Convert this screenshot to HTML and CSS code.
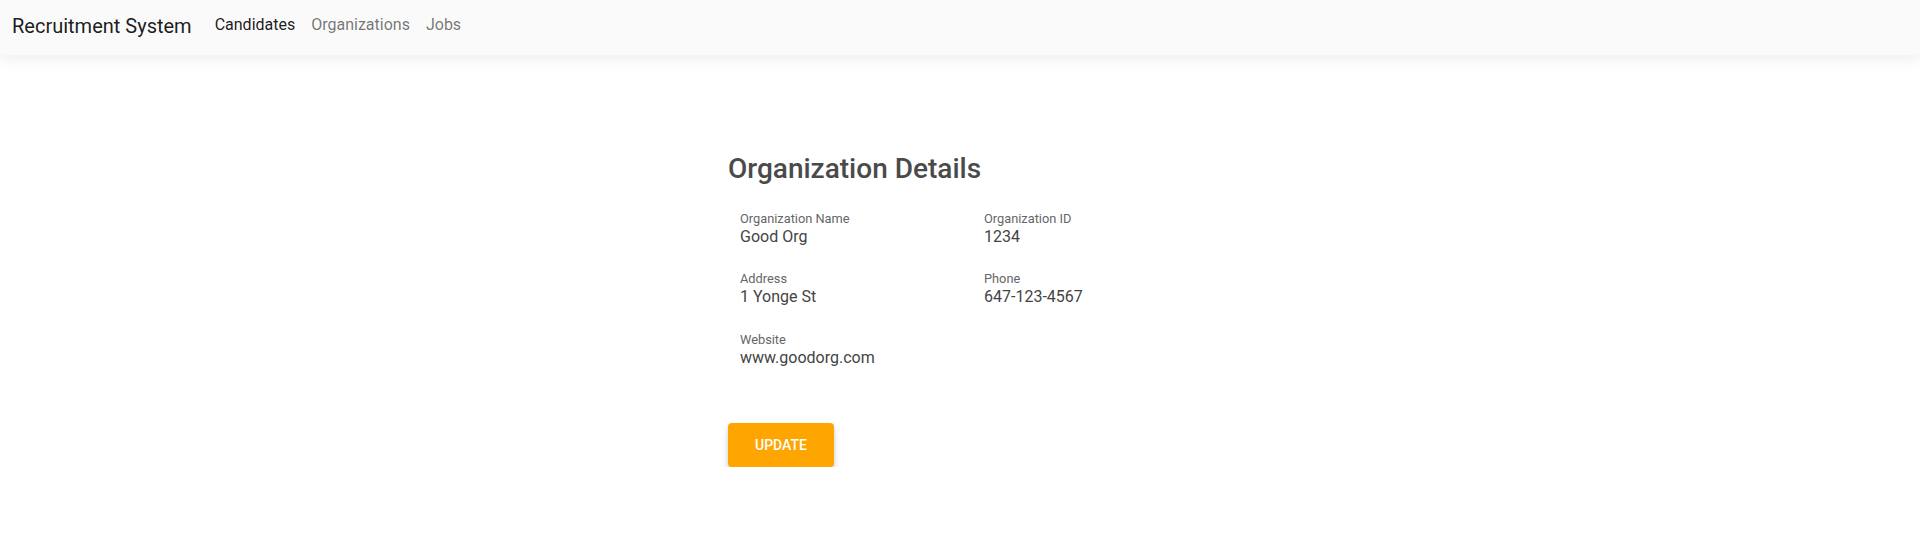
FILE: index.html
```html
<!DOCTYPE html>
<html lang="en">
<head>
<meta charset="utf-8">
<title>Recruitment System</title>
<link rel="stylesheet" href="styles.css">
</head>
<body>
<header class="navbar">
  <a class="brand" href="#">Recruitment System</a>
  <nav class="nav">
    <a class="nav-link active" href="#">Candidates</a>
    <a class="nav-link" href="#">Organizations</a>
    <a class="nav-link" href="#">Jobs</a>
  </nav>
</header>
<main class="container">
  <h1 class="title">Organization Details</h1>
  <div class="details">
    <div class="field">
      <div class="label">Organization Name</div>
      <div class="value">Good Org</div>
    </div>
    <div class="field">
      <div class="label">Organization ID</div>
      <div class="value">1234</div>
    </div>
    <div class="field">
      <div class="label">Address</div>
      <div class="value">1 Yonge St</div>
    </div>
    <div class="field">
      <div class="label">Phone</div>
      <div class="value">647-123-4567</div>
    </div>
    <div class="field">
      <div class="label">Website</div>
      <div class="value">www.goodorg.com</div>
    </div>
  </div>
  <button class="btn-update" type="button">Update</button>
</main>
</body>
</html>
```

FILE: styles.css
```css
* { box-sizing: border-box; }
html, body {
  margin: 0;
  padding: 0;
  background: #ffffff;
  font-family: Roboto, "Liberation Sans", Arial, sans-serif;
}
.navbar {
  height: 55px;
  display: flex;
  align-items: flex-start;
  padding: 11px 12px 0;
  background: #fafafa;
  box-shadow: 0 4px 14px rgba(0, 0, 0, 0.07);
}
.brand {
  font-size: 20px;
  line-height: 30px;
  color: rgba(0, 0, 0, 0.9);
  text-decoration: none;
  margin-right: 15px;
}
.nav {
  display: flex;
  margin-top: 2px;
}
.nav-link {
  font-size: 16px;
  line-height: 24px;
  color: rgba(0, 0, 0, 0.55);
  text-decoration: none;
  padding: 0 8px;
}
.nav-link.active {
  color: rgba(0, 0, 0, 0.9);
}
.container {
  width: 464px;
  margin: 0 auto;
  padding-top: 97px;
}
.title {
  margin: 0;
  font-size: 28px;
  font-weight: 500;
  line-height: 33px;
  color: #4a4a4a;
}
.details {
  display: grid;
  grid-template-columns: 244px 244px;
  row-gap: 23.5px;
  padding: 24.5px 0 0 12px;
}
.label {
  font-size: 12.8px;
  line-height: 17px;
  color: #666666;
}
.value {
  font-size: 16px;
  line-height: 20px;
  color: #444444;
}
.btn-update {
  margin-top: 55.5px;
  width: 106px;
  height: 44px;
  border: none;
  border-radius: 4px;
  background: #ffa500;
  color: #ffffff;
  font-family: Roboto, "Liberation Sans", Arial, sans-serif;
  font-size: 14px;
  font-weight: 500;
  text-transform: uppercase;
  box-shadow: 0 3px 5px -1px rgba(0, 0, 0, 0.2), 0 6px 10px 0 rgba(0, 0, 0, 0.1);
  cursor: pointer;
}
```
